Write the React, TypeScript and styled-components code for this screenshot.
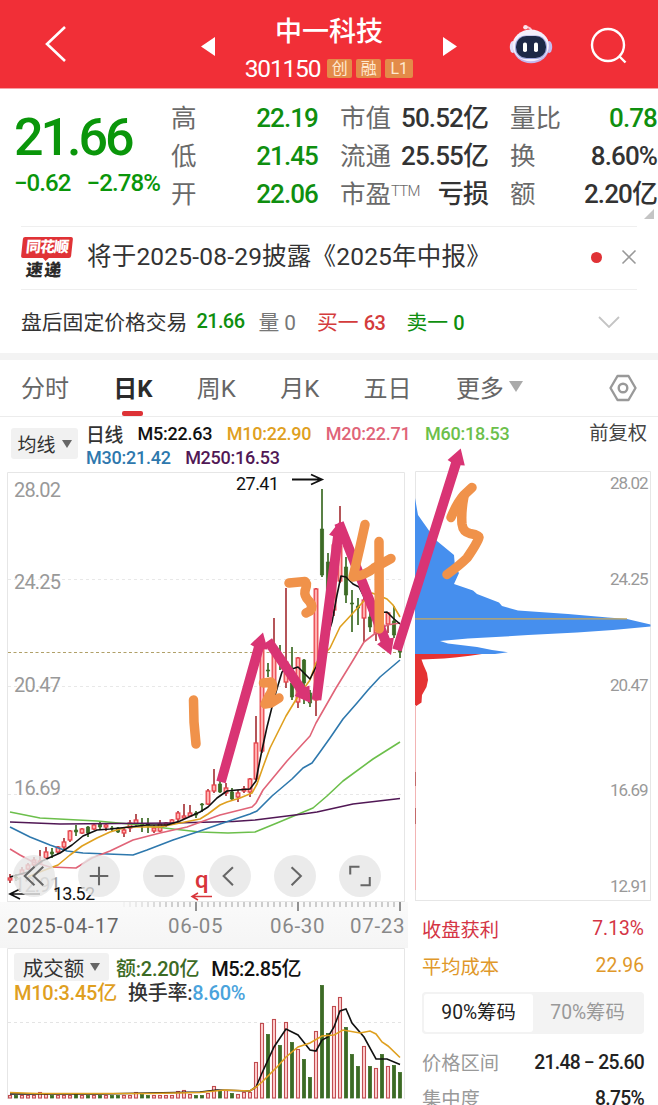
import type { ReactNode } from 'react';
import styled, { createGlobalStyle } from 'styled-components';

type Candle = [up: number, high: number, top: number, bottom: number, low: number];

const UP = '#e8434a';
const DOWN = '#3c6b25';

// up flag, high, body top, body bottom, low
const candles: Candle[] = [
  [1, 874, 878, 880, 883], [0, 874, 877, 878, 881], [1, 867, 870, 874, 875], [1, 863, 865, 869, 870],
  [1, 857, 860, 865, 867], [1, 850, 861, 863, 864], [1, 847, 852, 858, 860], [0, 848, 852, 854, 858],
  [1, 846, 847, 852, 854], [1, 838, 842, 847, 849], [1, 830, 831, 840, 842], [0, 825, 830, 832, 836],
  [1, 828, 829, 833, 834], [0, 826, 827, 833, 837], [1, 823, 825, 829, 830], [0, 821, 824, 827, 830],
  [1, 823, 825, 827, 831], [0, 826, 828, 829, 832], [0, 827, 828, 832, 833], [1, 828, 830, 833, 837],
  [1, 820, 823, 828, 832], [1, 814, 820, 824, 826], [0, 818, 824, 825, 832], [0, 818, 824, 825, 833],
  [1, 825, 828, 831, 833], [1, 820, 824, 831, 832], [1, 822, 823, 825, 827], [1, 819, 820, 824, 825],
  [1, 811, 813, 819, 821], [1, 804, 816, 818, 819], [1, 805, 813, 816, 817], [0, 811, 813, 815, 818],
  [0, 803, 804, 805, 812], [1, 789, 791, 804, 805], [1, 769, 785, 791, 793], [0, 781, 784, 792, 793],
  [1, 783, 788, 793, 796], [0, 788, 792, 799, 801], [1, 790, 793, 797, 802], [1, 786, 789, 791, 793],
  [1, 778, 779, 792, 797], [1, 716, 743, 779, 780], [1, 640, 648, 751, 753], [0, 663, 670, 671, 677],
  [1, 618, 655, 683, 685], [0, 645, 656, 663, 670], [1, 588, 662, 682, 688], [0, 647, 683, 697, 700],
  [1, 657, 658, 702, 708], [0, 659, 660, 683, 704], [0, 690, 693, 703, 707], [1, 588, 589, 700, 716],
  [0, 489, 529, 575, 577], [0, 553, 562, 618, 630], [1, 538, 545, 610, 616], [1, 506, 546, 581, 583],
  [0, 557, 567, 595, 603], [0, 590, 603, 604, 632], [0, 598, 606, 608, 625], [1, 598, 600, 618, 642],
  [0, 612, 617, 627, 632], [1, 604, 612, 633, 641], [0, 600, 625, 630, 640], [1, 612, 613, 624, 633],
  [0, 606, 621, 635, 638], [0, 643, 650, 652, 658],
];

const volumes = [
  3, 3, 3, 3, 3, 6, 4, 3, 3, 3, 3, 4, 3, 3, 3, 3, 3, 3, 3, 3, 3, 6, 4, 3, 3, 3, 3, 3, 7, 8, 4, 3, 3, 5, 12, 8, 8, 5, 4, 6,
  6, 36, 75, 64, 79, 53, 76, 56, 49, 39, 21, 67, 113, 65, 92, 101, 71, 44, 32, 52, 32, 30, 44, 32, 33, 26,
];

const priceLines = [
  {
    color: '#6cbf4b',
    points: '10,812 40,818 97,821 140,825 173,829 200,832 228,833 255,832 277,823 313,808 327,796 343,781 373,759 400,742',
  },
  { color: '#511855', points: '10,822 60,824 173,823 233,821.5 255,820 303,814 317,812 353,804 400,798.5' },
  {
    color: '#2e78ad',
    points:
      '10,827 30,837 50,845 67,851 83,853 133,855 147,850 173,840 200,831 220,824 250,814 257,811 272,796 292,779 303,768 312,763 320,752 330,738 343,719 357,703 368,690 380,677 400,660',
  },
  {
    color: '#e06478',
    points:
      '10,849 20,855 33,862 50,867 76,868 92,858 110,851 133,840 160,833 187,827 220,815 252,807 256,803 263,790 287,761 310,736 316,723 336,688 352,662 364,642 377,632 387,625 400,623',
  },
  {
    color: '#dfa01f',
    points:
      '28,877 37,873 58,865 70,855 82,846 97,838 110,832 127,827 160,827 180,823 200,819 208,814 220,805 227,802 240,798 252,793 257,784 263,767 270,748 286,716 297,698 310,680 316,663 330,648 340,627 353,613 362,603 372,593 380,596 387,599 393,605 400,617',
  },
  {
    color: '#111',
    points:
      '10,877 28,872 42,861 60,853 72,845 83,836 97,830 110,829 130,827 147,825 167,825 180,821 200,812 208,807 217,798 227,791 237,790 250,789 256,781 258,770 262,750 267,727 272,707 276,692 282,672 287,667 292,669 298,667 310,679 316,667 322,653 332,622 337,595 341,576 346,577 353,584 359,587 367,603 376,613 387,612 393,618 400,624',
  },
];

const arrows = [
  [221, 782, 263, 632.5],
  [268, 641, 310.5, 703],
  [316.5, 700, 340, 521],
  [339, 523, 391, 655],
  [397, 650, 460.7, 448.5],
];

// shaft and head of a hand-placed arrow as one polygon
function arrowPoints([x1, y1, x2, y2]: number[]) {
  const len = Math.hypot(x2 - x1, y2 - y1);
  const ux = (x2 - x1) / len;
  const uy = (y2 - y1) / len;
  const at = (along: number, side: number) =>
    `${(x1 + ux * along - uy * side).toFixed(1)},${(y1 + uy * along + ux * side).toFixed(1)}`;
  const neck = len - 16;
  return [at(0, -4.8), at(neck, -5), at(neck + 1, -9), at(len, 0), at(neck + 1, 9), at(neck, 5), at(0, 4.8)].join(' ');
}

const quotes = [
  ['高', '22.19', '市值', '50.52亿', '量比', '0.78'],
  ['低', '21.45', '流通', '25.55亿', '换', '8.60%'],
  ['开', '22.06', '市盈', '亏损', '额', '2.20亿'],
];

const priceLabels = [
  { text: '28.02', y: 490 },
  { text: '24.25', y: 582 },
  { text: '20.47', y: 685 },
  { text: '16.69', y: 788 },
  { text: '12.91', y: 885 },
];

const chipLabels = [
  { text: '28.02', y: 483 },
  { text: '24.25', y: 579 },
  { text: '20.47', y: 685 },
  { text: '16.69', y: 790 },
  { text: '12.91', y: 886 },
];

const tools = [
  'M22 12 L12 21.5 L22 31 M31 12 L21 21.5 L31 31',
  'M21.5 12 V31 M12 21.5 H31',
  'M12 21.5 H31',
  'M24.5 12.5 L15 21.5 L24.5 31',
  'M18 12.5 L27.5 21.5 L18 31',
  'M11.5 20 V12 H21 M22 31 H31.5 V22.5',
];

function Header() {
  return (
    <TopBar>
      <BackIcon viewBox='0 0 24 40'>
        <path d='M21 3 L3 20 L21 37' fill='none' stroke='#fff' strokeWidth='2.6' />
      </BackIcon>
      <Stepper>
        <Triangle viewBox='0 0 14 19'>
          <path d='M14 0 V19 L0 9.5 Z' fill='#fff' />
        </Triangle>
        <Heading>
          <StockName>中一科技</StockName>
          <StockMeta>
            <StockCode>301150</StockCode>
            <Badge>创</Badge>
            <Badge>融</Badge>
            <Badge $wide>L1</Badge>
          </StockMeta>
        </Heading>
        <Triangle viewBox='0 0 14 19'>
          <path d='M0 0 V19 L14 9.5 Z' fill='#fff' />
        </Triangle>
      </Stepper>
      <Robot viewBox='0 0 44 40'>
        <path d='M22.5 7 Q22 3.5 17 3' fill='none' stroke='#f9c3d0' strokeWidth='2' strokeLinecap='round' />
        <circle cx='16.5' cy='3.2' r='2.3' fill='#fbe6ee' />
        <ellipse cx='3.8' cy='23' rx='3' ry='6' fill='#e2defa' />
        <ellipse cx='40.2' cy='23' rx='3' ry='6' fill='#c5bcf0' />
        <ellipse cx='22' cy='22.8' rx='18.3' ry='16.4' fill='#c3b6ee' />
        <ellipse cx='21.7' cy='21.4' rx='18.2' ry='15.8' fill='#f4effc' />
        <rect x='6' y='11.5' width='32' height='23.5' rx='11' fill='#9fa6dd' />
        <rect x='7' y='12' width='30' height='22' rx='10.5' fill='#1d2847' />
        <rect x='14' y='18.5' width='4' height='9.5' rx='1.8' fill='#fff' />
        <rect x='25' y='18.5' width='4' height='9.5' rx='1.8' fill='#fff' />
      </Robot>
      <SearchIcon viewBox='0 0 38 38'>
        <circle cx='18' cy='18' r='16' fill='none' stroke='#fff' strokeWidth='2.4' />
        <path d='M29 29 L35.5 35.5' stroke='#fff' strokeWidth='2.4' />
      </SearchIcon>
    </TopBar>
  );
}

function Quote() {
  return (
    <QuotePanel>
      <Price>
        <PriceNow>21.66</PriceNow>
        <PriceChange>
          <span>−0.62</span>
          <span>−2.78%</span>
        </PriceChange>
      </Price>
      <QuoteGrid>
        {quotes.map((row, i) => (
          <QuoteRow key={row[0]}>
            <QuoteLabel>{row[0]}</QuoteLabel>
            <QuoteValue $color='#0f8f0f'>{row[1]}</QuoteValue>
            <QuoteLabel>
              {row[2]}
              {i === 2 && <Sup>TTM</Sup>}
            </QuoteLabel>
            <QuoteValue>{row[3]}</QuoteValue>
            <QuoteLabel>{row[4]}</QuoteLabel>
            <QuoteValue $color={i === 0 ? '#0f8f0f' : undefined}>{row[5]}</QuoteValue>
          </QuoteRow>
        ))}
      </QuoteGrid>
      <Corner viewBox='0 0 10 10'>
        <path d='M10 0 V10 H0 Z' fill='#c4c4c4' />
      </Corner>
    </QuotePanel>
  );
}

function PriceChart() {
  return (
    <Plot viewBox='0 471 408 431' $height={431}>
      <path d='M7.5 902 V472.5 H404.5 V902 M7.5 901.5 H404.5' fill='none' stroke='#e6e6e6' />
      {[579.5, 686.5, 794.5].map((y) => (
        <path key={y} d={`M8 ${y} H404`} stroke='#e8e8e8' strokeDasharray='3 3' />
      ))}
      <path d='M8 652.5 H404' stroke='#b0a068' strokeDasharray='3 2.5' />
      {candles.map(([up, high, top, bottom, low], i) => {
        const x = 10 + i * 6;
        return (
          <g key={x}>
            <path d={`M${x} ${high} V${low}`} stroke={up ? '#a8383c' : DOWN} strokeWidth='1.7' />
            <rect
              x={x - 1.8}
              y={top}
              width={3.6}
              height={Math.max(bottom - top, 1)}
              fill={up ? '#ffb0b0' : DOWN}
              stroke={up ? UP : DOWN}
              strokeWidth={up ? 1.3 : 0.5}
            />
          </g>
        );
      })}
      {priceLines.map(({ color, points }) => (
        <polyline key={color} points={points} fill='none' stroke={color} strokeWidth='1.6' strokeLinejoin='round' />
      ))}
      {priceLabels.map(({ text, y }) => (
        <AxisText key={text} x='14' y={y} textLength='47'>
          {text}
        </AxisText>
      ))}
      <MarkText x='236' y='483.5' textLength='43'>
        27.41
      </MarkText>
      <path d='M292 479.5 H321 M311 474.5 L322 479.5 L311 484.5' fill='none' stroke='#111' strokeWidth='1.8' />
      <MarkText x='53' y='893.5' textLength='42'>
        13.52
      </MarkText>
      <path d='M20 889 L10 894 L20 899 M10 894 H40' fill='none' stroke='#111' strokeWidth='1.7' />
      <QText x='195' y='880'>
        q
      </QText>
      <path d='M212 896.5 H192 M198 893 L192 896.5 L198 900' fill='none' stroke='#d8353b' strokeWidth='1.5' />
    </Plot>
  );
}

function VolumeChart() {
  return (
    <VolumePanel>
      <VolumeLegend>
        <VolumeRow $gap={7}>
          <Picker $small>
            成交额
            <Caret viewBox='0 0 10 8'>
              <path d='M0 0 H10 L5 8 Z' />
            </Caret>
          </Picker>
          <Legend $color='#3c6b25' $size={20}>额:2.20亿</Legend>
          <VolumeAverage>M5:2.85亿</VolumeAverage>
        </VolumeRow>
        <VolumeRow $gap={11}>
          <Legend $color='#dfa01f' $size={20}>M10:3.45亿</Legend>
          <Legend $color='#333' $size={20}>
            换手率:<Cyan>8.60%</Cyan>
          </Legend>
        </VolumeRow>
      </VolumeLegend>
      <VolumePlot viewBox='0 948 408 157'>
        <path d='M7.5 1099 V948.5 H404.5 V1099' fill='none' stroke='#e6e6e6' />
        <path d='M8 1022.5 H404' stroke='#e4e4e4' strokeDasharray='3 3' />
        {volumes.map((v, i) => {
          const up = candles[i][0];
          return (
            <rect
              key={i}
              x={8.5 + i * 6}
              y={1098 - v + 0.5}
              width={3}
              height={v - 0.5}
              fill={up ? '#ffd2d2' : DOWN}
              stroke={up ? '#c04c50' : DOWN}
              strokeWidth={up ? 1.1 : 0.8}
            />
          );
        })}
        <polyline
          points='10,1094 100,1094 200,1092 217,1090 250,1091 256,1087 262,1073 274,1047 286,1029 298,1035 310,1050 316,1051 322,1040 328,1037 334,1027 340,1011 346,1009 352,1023 364,1037 376,1059 387,1059 400,1064.5'
          fill='none'
          stroke='#111'
          strokeWidth='1.6'
        />
        <polyline
          points='10,1092.5 37,1093.5 150,1093.5 200,1092.5 225,1090 250,1091 256,1087 262,1082 277,1067 286,1057 298,1047 310,1043 322,1036 334,1035 343,1030 360,1033 370,1031 376,1034 382,1042 388,1046 400,1057.5'
          fill='none'
          stroke='#dfa01f'
          strokeWidth='1.6'
        />
      </VolumePlot>
    </VolumePanel>
  );
}

function ChipChart() {
  return (
    <Plot viewBox='408 471 250 431' $height={431}>
      <path d='M415.5 471.5 H650.5 V901 M415.5 900.5 H650.5 M415.5 471.5 V901' fill='none' stroke='#e6e6e6' />
      <path
        d='M415 498 L418 515 L430 532 L437 541 L454 555 L455 567 L459 573 L454 584 L473 590.5 L477 594 L499 602.5 L502 606 L518 610.5 L568 614 L608 617.5 L627 619 L650.5 624.5 V626.5 L613 630 L577 632.5 L528 635 L505 636.5 L468 638.5 L440 641 L448 643.5 L477 647 L492 650 L508 652.3 L495 654 H415 Z'
        fill='#468fee'
      />
      <path
        d='M415 654 H482 L470 655.7 L455 657.5 L444 658.5 L421.5 659.5 L423.5 665 L427 673 L428 680 L426.5 687 L422 695 L421.5 702.5 L416.3 706 H415 Z'
        fill='#e53232'
      />
      <path d='M415.5 705 V890' stroke='#f2b4b4' strokeWidth='1' />
      <path d='M415.5 772 V786 M415.5 808 V824' stroke='#c46a6a' />
      <path d='M415 618.8 H627' stroke='#c8a95c' strokeWidth='1.2' />
      {chipLabels.map(({ text, y }) => (
        <AxisText key={text} x='610' y={y} textLength='38.5' $small>
          {text}
        </AxisText>
      ))}
    </Plot>
  );
}

function Annotations() {
  return (
    <Overlay viewBox='0 417 658 500'>
      {arrows.map((a) => (
        <polygon key={a[0]} points={arrowPoints(a)} fill='#d93474' />
      ))}
      <g fill='none' stroke='#f0924a' strokeWidth='9.5' strokeLinecap='round' strokeLinejoin='round'>
        <path d='M193.5 700 L194 722 L196 744' />
        <path d='M263.5 683 L271 682 Q275 687 269 696 L265 704 L271 703 L279 698' />
        <path d='M289 583 L305 581.5 Q308 583 305 591 Q304 596 309 601 Q314 606 310 611 L306 613' />
        <path d='M365 524.5 L360 547 L353 577 Q366 575 374 568 L391 558.5' />
        <path d='M379 541.5 L379.3 629' />
        <path d='M451 517.5 Q457 503 464 495 L472 487.5' />
        <path d='M464 496 Q461 512 462 524 Q463 532 470 533.5 Q479 535 479 537 Q478 542 467 558 Q460 565 447 574.5' />
      </g>
    </Overlay>
  );
}

function DateAxis() {
  return (
    <Dates>
      <Ticks viewBox='0 902 408 12'>
        {Array.from({ length: 47 }, (_, i) => {
          const x = 124 + i * 6;
          const major = x === 196 || x === 298 || x === 400;
          return (
            <path
              key={x}
              d={`M${x} 902 V${major ? 911 : 907}`}
              stroke={major ? '#777' : '#c2c2c2'}
              strokeWidth='1.6'
              opacity={major ? 1 : Math.min(1, 0.15 + i * 0.1)}
            />
          );
        })}
      </Ticks>
      <DateRow>
        <DateText $width={161} $dark>2025-04-17</DateText>
        <DateText $width={102}>06-05</DateText>
        <DateText $width={80}>06-30</DateText>
        <DateText $width={58}>07-23</DateText>
      </DateRow>
    </Dates>
  );
}

function StatRow({ label, value, color, height }: { label: string; value: ReactNode; color?: string; height: number }) {
  return (
    <Stat $color={color} $height={height}>
      <span>{label}</span>
      <StatValue $color={color}>{value}</StatValue>
    </Stat>
  );
}

export default function App() {
  return (
    <Screen>
      <GlobalStyle />
      <Header />
      <Quote />
      <News>
        <NewsLogo>
          <LogoTop>同花顺</LogoTop>
          <LogoBottom>速递</LogoBottom>
        </NewsLogo>
        <NewsText>将于2025-08-29披露《2025年中报》</NewsText>
        <Dot />
        <CloseIcon viewBox='0 0 16 16'>
          <path d='M1.5 1.5 L14.5 14.5 M14.5 1.5 L1.5 14.5' stroke='#999' strokeWidth='1.6' />
        </CloseIcon>
      </News>
      <AfterHours>
        <AfterText $color='#333' $gap={9}>盘后固定价格交易</AfterText>
        <AfterText $color='#0f8f0f' $gap={14}>
          <b>21.66</b>
        </AfterText>
        <AfterText $color='#777' $gap={21}>量 0</AfterText>
        <AfterText $color='#d43c3c' $gap={21}>
          买一 <b>63</b>
        </AfterText>
        <AfterText $color='#0f8f0f' $gap={0}>
          卖一 <b>0</b>
        </AfterText>
        <ChevronDown viewBox='0 0 22 12'>
          <path d='M1 1 L11 11 L21 1' fill='none' stroke='#c4c4c4' strokeWidth='1.8' />
        </ChevronDown>
      </AfterHours>
      <Divider />
      <Tabs>
        <Tab>分时</Tab>
        <Tab $active>日K</Tab>
        <Tab>周K</Tab>
        <Tab>月K</Tab>
        <Tab>五日</Tab>
        <Tab>
          更多
          <MoreCaret viewBox='0 0 14 11'>
            <path d='M0 0 H14 L7 11 Z' fill='#aaa' />
          </MoreCaret>
        </Tab>
        <HexIcon viewBox='0 0 28 28'>
          <path
            d='M8.5 2 H19.5 L26.5 14 L19.5 26 H8.5 L1.5 14 Z'
            fill='none'
            stroke='#999'
            strokeWidth='2.4'
            strokeLinejoin='round'
          />
          <circle cx='14' cy='14' r='4.3' fill='none' stroke='#999' strokeWidth='2.4' />
        </HexIcon>
      </Tabs>
      <ChartArea>
        <LegendBar>
          <Picker>
            均线
            <Caret viewBox='0 0 10 8'>
              <path d='M0 0 H10 L5 8 Z' />
            </Caret>
          </Picker>
          <LegendLines>
            <LegendRow>
              <Legend $color='#333' $size={18.8}>日线</Legend>
              <Legend $color='#111'>M5:22.63</Legend>
              <Legend $color='#dfa01f'>M10:22.90</Legend>
              <Legend $color='#e06478'>M20:22.71</Legend>
              <Legend $color='#6cbf4b'>M60:18.53</Legend>
            </LegendRow>
            <LegendRow>
              <Legend $color='#2e78ad'>M30:21.42</Legend>
              <Legend $color='#511855'>M250:16.53</Legend>
            </LegendRow>
          </LegendLines>
          <Adjust>前复权</Adjust>
        </LegendBar>
        <Columns>
          <LeftColumn>
            <PriceBox>
              <PriceChart />
              <Toolbar>
                {tools.map((d) => (
                  <ToolButton key={d}>
                    <svg viewBox='0 0 43 43' width='42' height='42'>
                      <path d={d} fill='none' stroke='#666' strokeWidth='2.1' />
                    </svg>
                  </ToolButton>
                ))}
              </Toolbar>
            </PriceBox>
            <DateAxis />
            <VolumeChart />
          </LeftColumn>
          <RightColumn>
            <ChipChart />
            <Stats>
              <StatRow label='收盘获利' value='7.13%' color='#d43545' height={37} />
              <StatRow label='平均成本' value='22.96' color='#e0982a' height={37} />
              <Segment>
                <SegmentItem $active>90%筹码</SegmentItem>
                <SegmentItem>70%筹码</SegmentItem>
              </Segment>
              <StatRow label='价格区间' value='21.48 − 25.60' height={36} />
              <StatRow label='集中度' value='8.75%' height={36} />
            </Stats>
          </RightColumn>
        </Columns>
        <Annotations />
      </ChartArea>
    </Screen>
  );
}

const GlobalStyle = createGlobalStyle`
  * {
    box-sizing: border-box;
  }

  body {
    margin: 0;
    background-color: #fff;
    font-family: Roboto, 'Noto Sans CJK SC', sans-serif;
  }

  svg {
    display: block;
    flex-shrink: 0;
  }
`;

const Screen = styled.div`
  width: 658px;
  height: 1105px;

  display: flex;
  flex-direction: column;

  background-color: #fff;
  overflow: hidden;
  white-space: nowrap;
`;

const TopBar = styled.header`
  height: 89px;
  flex-shrink: 0;

  display: flex;
  align-items: center;

  background-color: #f12f37;
  border-bottom: 1px solid #f7a0a4;
  padding: 0 30px 0 44px;
`;

const BackIcon = styled.svg`
  width: 24px;
  height: 40px;
`;

const Stepper = styled.div`
  width: 256px;
  margin-left: 133px;

  display: flex;
  align-items: center;
  justify-content: space-between;
`;

const Triangle = styled.svg`
  width: 14px;
  height: 19px;
  margin-top: 4px;
`;

const Heading = styled.div`
  padding-top: 9px;

  display: flex;
  flex-direction: column;
  align-items: center;
`;

const StockName = styled.div`
  height: 40px;

  font-size: 27px;
  font-weight: 500;
  line-height: 40px;
  color: #fff;
`;

const StockMeta = styled.div`
  height: 33px;

  display: flex;
  align-items: center;
  gap: 4px;
`;

const StockCode = styled.span`
  margin-right: 3px;

  font-size: 24.5px;
  letter-spacing: -1.2px;
  color: #fff;
`;

const Badge = styled.span<{ $wide?: boolean }>`
  width: ${({ $wide }) => ($wide ? 28 : 25)}px;
  height: 19px;

  border-radius: 2px;
  background-color: #e38b49;

  font-size: 16px;
  line-height: 19px;
  text-align: center;
  color: #ffe9d0;
`;

const Robot = styled.svg`
  width: 44px;
  height: 40px;
  margin-left: 52px;
`;

const SearchIcon = styled.svg`
  width: 38px;
  height: 38px;
  margin: 4px 0 0 37px;
`;

const QuotePanel = styled.section`
  height: 137px;
  flex-shrink: 0;

  display: flex;

  position: relative;
`;

const Price = styled.div`
  width: 171px;
  padding: 19px 0 0 14px;

  color: #0a960a;
`;

const PriceNow = styled.div`
  height: 61px;

  font-size: 52px;
  font-weight: 500;
  line-height: 60px;
  letter-spacing: -3px;
`;

const PriceChange = styled.div`
  display: flex;
  gap: 16px;

  font-size: 24px;
  font-weight: 500;
  line-height: 28px;
  letter-spacing: -0.9px;
`;

const QuoteGrid = styled.div`
  padding-top: 10px;
`;

const QuoteRow = styled.div`
  height: 38px;

  display: grid;
  grid-template-columns: 48px 99px 83px 87px 70px 99px;
  align-items: center;

  & > :nth-child(3),
  & > :nth-child(5) {
    padding-left: 22px;
  }
`;

const QuoteLabel = styled.span`
  font-size: 25.5px;
  line-height: 36px;
  color: #6a6a6a;
`;

const QuoteValue = styled.span<{ $color?: string }>`
  display: flex;
  justify-content: flex-end;

  font-size: 26px;
  font-weight: 500;
  line-height: 38px;
  letter-spacing: -0.9px;
  color: ${({ $color }) => $color ?? '#333'};
`;

const Sup = styled.sup`
  font-size: 15px;
  font-weight: 300;
  line-height: 1;
  letter-spacing: -0.8px;
  vertical-align: 7px;
`;

const Corner = styled.svg`
  width: 10px;
  height: 10px;

  position: absolute;
  right: 4px;
  bottom: 7px;
`;

const News = styled.section`
  height: 64px;
  flex-shrink: 0;
  margin: 0 21px;

  display: flex;
  align-items: center;

  border-top: 1px solid #efefef;
  border-bottom: 1px solid #efefef;
`;

const NewsLogo = styled.div`
  width: 52px;
  height: 43px;

  display: flex;
  flex-direction: column;
  align-items: center;
`;

const LogoTop = styled.div`
  width: 50px;
  height: 21px;

  border-radius: 2px;
  background-color: #e03236;
  transform: skewX(-6deg);

  position: relative;

  font-size: 15px;
  font-weight: 900;
  line-height: 20px;
  letter-spacing: -1px;
  text-align: center;
  color: #fff;

  &::after {
    content: '';
    border: 4px solid transparent;
    border-top-color: #e03236;

    position: absolute;
    left: 21px;
    top: 20px;
  }
`;

const LogoBottom = styled.div`
  height: 22px;
  margin-right: 6px;

  font-size: 17px;
  font-weight: 900;
  line-height: 24px;
  letter-spacing: 1.5px;
  color: #2a2a2a;
  transform: skewX(-6deg);
`;

const NewsText = styled.div`
  margin-left: 14px;
  flex: 1;

  font-size: 24.5px;
  line-height: 34px;
  letter-spacing: 0.2px;
  padding-bottom: 2px;
  color: #333;
`;

const Dot = styled.span`
  width: 11px;
  height: 11px;
  margin-bottom: 2px;

  border-radius: 50%;
  background-color: #e03236;
`;

const CloseIcon = styled.svg`
  width: 16px;
  height: 16px;
  margin: 0 0 2px 19px;
`;

const AfterHours = styled.section`
  height: 63px;
  flex-shrink: 0;
  padding: 0 38px 0 21px;

  display: flex;
  align-items: center;
`;

const AfterText = styled.span<{ $color: string; $gap: number }>`
  margin-right: ${({ $gap }) => $gap}px;
  padding-bottom: 2px;

  font-size: 20.8px;
  color: ${({ $color }) => $color};

  b {
    font-size: 20px;
    font-weight: 500;
    letter-spacing: -0.6px;
  }
`;

const ChevronDown = styled.svg`
  width: 22px;
  height: 12px;
  margin-left: auto;
`;

const Divider = styled.div`
  height: 7px;
  flex-shrink: 0;

  background-color: #f3f3f3;
`;

const Tabs = styled.nav`
  height: 57px;
  flex-shrink: 0;
  padding: 0 21px;

  display: flex;
  align-items: center;
  gap: 44.3px;

  border-bottom: 1px solid #ececec;
`;

const Tab = styled.div<{ $active?: boolean }>`
  height: 56px;
  padding-bottom: 3px;

  display: flex;
  align-items: center;

  position: relative;

  font-size: 24px;
  font-weight: ${({ $active }) => ($active ? 700 : 400)};
  color: ${({ $active }) => ($active ? '#2b2b2b' : '#666')};

  &::after {
    content: '';
    display: ${({ $active }) => ($active ? 'block' : 'none')};
    width: 21px;
    height: 5px;
    border-radius: 2px;
    background-color: #dd3236;

    position: absolute;
    left: 9px;
    bottom: 0;
  }
`;

const MoreCaret = styled.svg`
  width: 14px;
  height: 11px;
  margin-left: 5px;
`;

const HexIcon = styled.svg`
  width: 28px;
  height: 28px;
  margin-left: auto;
`;

const ChartArea = styled.main`
  flex: 1;

  position: relative;
`;

const LegendBar = styled.div`
  height: 54px;
  padding: 4px 11px;

  display: flex;
`;

const Picker = styled.div<{ $small?: boolean }>`
  height: ${({ $small }) => ($small ? 28 : 31)}px;
  width: ${({ $small }) => ($small ? 95 : 67)}px;
  margin-top: ${({ $small }) => ($small ? 0 : 7)}px;

  display: flex;
  align-items: center;
  justify-content: center;
  gap: 6px;

  border-radius: 3px;
  background-color: #f1f1f1;

  font-size: ${({ $small }) => ($small ? 20.5 : 19)}px;
  color: #333;
`;

const Caret = styled.svg`
  width: 10px;
  height: 8px;

  fill: #666;
`;

const LegendLines = styled.div`
  margin-left: 8px;
`;

const LegendRow = styled.div`
  height: 24px;

  display: flex;
  align-items: center;
  gap: 14.5px;
`;

const VolumeRow = styled(LegendRow)<{ $gap: number }>`
  gap: ${({ $gap }) => $gap}px;
`;

const Legend = styled.span<{ $color: string; $size?: number }>`
  font-size: ${({ $size }) => $size ?? 18}px;
  font-weight: 500;
  letter-spacing: -0.25px;
  color: ${({ $color }) => $color};
`;

const VolumeAverage = styled(Legend).attrs({ $color: '#111', $size: 20 })`
  margin-left: 5px;

  letter-spacing: -0.5px;
`;

const Cyan = styled.span`
  color: #4aa3dc;
`;

const Adjust = styled.span`
  margin-left: auto;

  font-size: 19.3px;
  line-height: 26px;
  color: #444;
`;

const Columns = styled.div`
  display: flex;
`;

const LeftColumn = styled.div`
  width: 408px;
`;

const RightColumn = styled.div`
  width: 250px;
`;

const PriceBox = styled.div`
  position: relative;
`;

const Plot = styled.svg<{ $height: number }>`
  width: 100%;
  height: ${({ $height }) => $height}px;
`;

const AxisText = styled.text<{ $small?: boolean }>`
  font-size: ${({ $small }) => ($small ? 17 : 20)}px;
  fill: #999;
  dominant-baseline: central;
`;

const MarkText = styled.text`
  font-size: 18px;
  fill: #111;
  dominant-baseline: central;
`;

const QText = styled.text`
  font-size: 24px;
  font-weight: 500;
  fill: #d8353b;
  dominant-baseline: central;
`;

const Toolbar = styled.div`
  width: 368px;

  display: flex;
  justify-content: space-between;

  position: absolute;
  left: 13px;
  bottom: 5px;
`;

const ToolButton = styled.div`
  width: 42px;
  height: 42px;

  border-radius: 50%;
  background-color: rgba(230, 230, 230, 0.8);
`;

const Dates = styled.div`
  height: 46px;

  background: linear-gradient(#fafafa, #f5f5f5);
`;

const Ticks = styled.svg`
  width: 408px;
  height: 12px;
`;

const DateRow = styled.div`
  padding-left: 7px;

  display: flex;
`;

const DateText = styled.span<{ $width: number; $dark?: boolean }>`
  width: ${({ $width }) => $width}px;

  font-size: 20.5px;
  line-height: 24px;
  letter-spacing: ${({ $dark }) => ($dark ? 0.9 : 0.7)}px;
  color: ${({ $dark }) => ($dark ? '#666' : '#888')};
`;

const VolumePanel = styled.div`
  position: relative;
`;

const VolumeLegend = styled.div`
  position: absolute;
  left: 14px;
  top: 7px;
`;

const VolumePlot = styled.svg`
  width: 408px;
  height: 157px;
`;

const Stats = styled.div`
  padding: 8px 14px 0;
`;

const Stat = styled.div<{ $color?: string; $height: number }>`
  height: ${({ $height }) => $height}px;

  display: flex;
  justify-content: space-between;
  align-items: center;

  font-size: 19.3px;
  color: ${({ $color }) => $color ?? '#999'};
`;

const StatValue = styled.span<{ $color?: string }>`
  font-weight: ${({ $color }) => ($color ? 400 : 500)};
  letter-spacing: ${({ $color }) => ($color ? 0 : -0.7)}px;
  color: ${({ $color }) => $color ?? '#222'};
`;

const Segment = styled.div`
  height: 42px;
  margin: 8px 0 10px;
  padding: 2px;

  display: flex;

  border-radius: 4px;
  background-color: #f3f3f3;
`;

const SegmentItem = styled.div<{ $active?: boolean }>`
  flex: 1;

  border-radius: 3px;
  background-color: ${({ $active }) => ($active ? '#fff' : 'transparent')};

  font-size: 19.3px;
  line-height: 38px;
  text-align: center;
  color: ${({ $active }) => ($active ? '#222' : '#999')};
`;

const Overlay = styled.svg`
  width: 658px;
  height: 500px;

  position: absolute;
  left: 0;
  top: 0;

  pointer-events: none;
`;
